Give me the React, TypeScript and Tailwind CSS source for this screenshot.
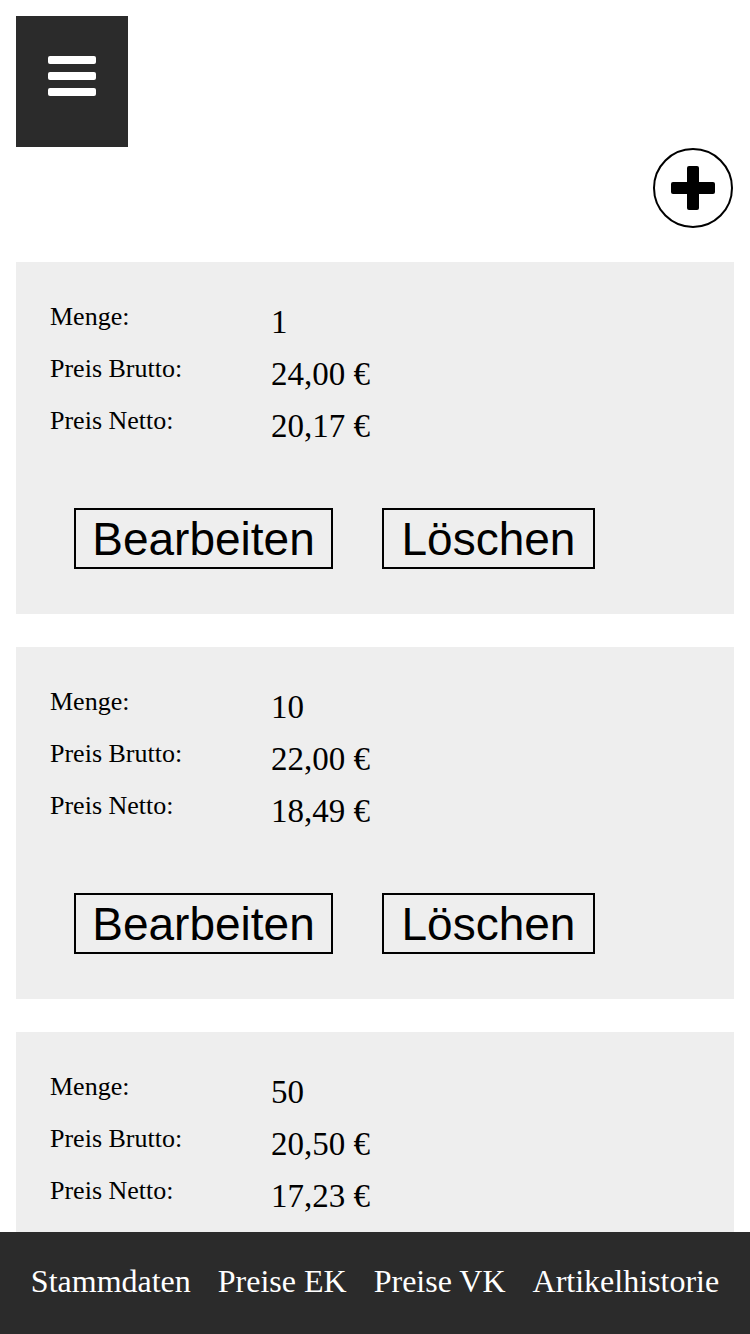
import React from 'react';

type PriceRow = {
  menge: string;
  brutto: string;
  netto: string;
};

const prices: PriceRow[] = [
  { menge: '1', brutto: '24,00 €', netto: '20,17 €' },
  { menge: '10', brutto: '22,00 €', netto: '18,49 €' },
  { menge: '50', brutto: '20,50 €', netto: '17,23 €' },
];

const serif = { fontFamily: '"Liberation Serif", "Times New Roman", serif' };
const sans = { fontFamily: '"Liberation Sans", Arial, sans-serif' };

const InfoRow: React.FC<{ label: string; value: string }> = ({ label, value }) => (
  <div className="flex h-[52px] items-start">
    <span className="w-[221px] text-[26px] leading-[30px] pt-[1px] text-black">{label}</span>
    <span className="text-[33px] leading-[38px] pt-[2px] text-black">{value}</span>
  </div>
);

const PriceCard: React.FC<{ row: PriceRow }> = ({ row }) => (
  <div className="shrink-0 bg-[#eeeeee] pl-[34px] pt-[39px] pb-[45px]" style={serif}>
    <InfoRow label="Menge:" value={row.menge} />
    <InfoRow label="Preis Brutto:" value={row.brutto} />
    <InfoRow label="Preis Netto:" value={row.netto} />

    {/* Actions */}
    <div className="flex gap-[49px] pl-[24px] mt-[51px]" style={sans}>
      <button className="w-[259px] h-[61px] border-2 border-black flex items-center justify-center text-[46px] leading-none text-black">
        Bearbeiten
      </button>
      <button className="w-[213px] h-[61px] border-2 border-black flex items-center justify-center text-[46px] leading-none text-black">
        Löschen
      </button>
    </div>
  </div>
);

export default function App() {
  return (
    <div className="h-screen bg-white flex flex-col overflow-hidden">
      <main className="flex-1 overflow-hidden">
        {/* Menu */}
        <div className="px-4 pt-4">
          <button className="w-[112px] h-[131px] bg-[#2b2b2b] flex flex-col items-center pt-[40px] gap-[8px]">
            <span className="block w-12 h-2 bg-white rounded-[2px]" />
            <span className="block w-12 h-2 bg-white rounded-[2px]" />
            <span className="block w-12 h-2 bg-white rounded-[2px]" />
          </button>
        </div>

        {/* Add */}
        <div className="flex justify-end pr-[17px] mt-[1px]">
          <button className="w-20 h-20 rounded-full border-2 border-black flex items-center justify-center">
            <svg width="46" height="46" viewBox="0 0 46 46">
              <rect x="17" y="1" width="12" height="44" rx="2" fill="#000" />
              <rect x="1" y="17" width="44" height="12" rx="2" fill="#000" />
            </svg>
          </button>
        </div>

        {/* Price list */}
        <div className="mx-4 mt-[34px] flex flex-col gap-[33px]">
          {prices.map((p) => (
            <PriceCard key={p.menge} row={p} />
          ))}
        </div>
      </main>

      {/* Bottom navigation */}
      <nav
        className="shrink-0 h-[102px] bg-[#2b2b2b] flex items-center justify-center gap-[27px] pb-[4px] text-white text-[32px]"
        style={serif}
      >
        <span>Stammdaten</span>
        <span>Preise EK</span>
        <span>Preise VK</span>
        <span>Artikelhistorie</span>
      </nav>
    </div>
  );
}
